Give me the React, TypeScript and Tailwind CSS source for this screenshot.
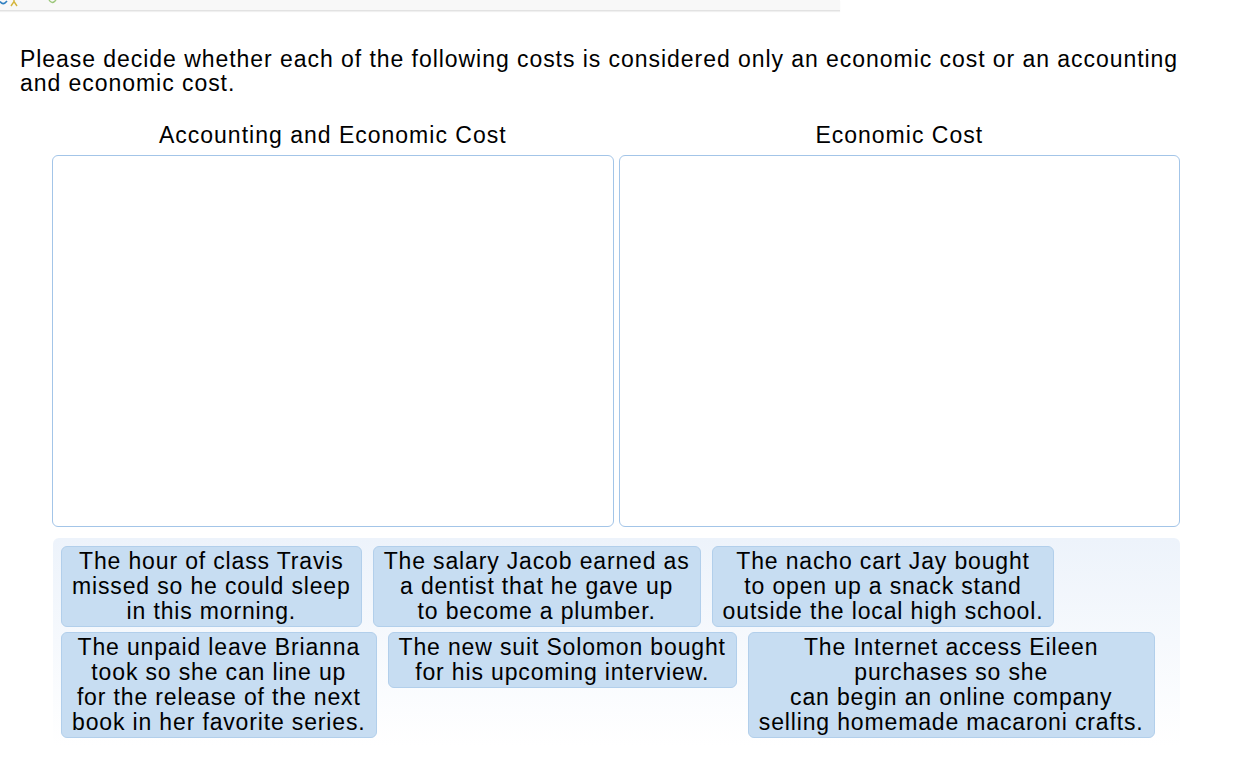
import React from "react";

const cards: string[][] = [
  ["The hour of class Travis", "missed so he could sleep", "in this morning."],
  ["The salary Jacob earned as", "a dentist that he gave up", "to become a plumber."],
  ["The nacho cart Jay bought", "to open up a snack stand", "outside the local high school."],
  [
    "The unpaid leave Brianna",
    "took so she can line up",
    "for the release of the next",
    "book in her favorite series.",
  ],
  ["The new suit Solomon bought", "for his upcoming interview."],
  [
    "The Internet access Eileen",
    "purchases so she",
    "can begin an online company",
    "selling homemade macaroni crafts.",
  ],
];

const App: React.FC = () => {
  return (
    <div className="min-h-[772px] bg-white font-['Liberation_Sans',Arial,sans-serif] text-black">
      {/* toolbar strip left over from the page header */}
      <div className="h-[11px] w-[840px] bg-[#f8f8f8] border-b border-[#e2e2e2] shadow-[0_1px_1px_rgba(0,0,0,0.06)] overflow-hidden relative">
        <svg width="60" height="11" viewBox="0 0 60 11" className="absolute left-0 top-0">
          <path d="M0 1.5 Q3 6 7 1" fill="none" stroke="#2f7fc0" strokeWidth="1.6" />
          <path d="M11 6 L14 1.5 L17 6 M14 1.5 L14 -2" fill="none" stroke="#d4b53b" strokeWidth="1.4" />
          <path d="M49 0 Q52 5 56 0" fill="none" stroke="#9cc77a" strokeWidth="1.4" />
        </svg>
      </div>

      <div className="pl-5 pr-2 pt-[36px]">
        <p className="text-[23px] leading-6 tracking-[0.95px] whitespace-nowrap">
          Please decide whether each of the following costs is considered only an economic cost or an accounting
          <br />
          and economic cost.
        </p>
      </div>

      <div className="ml-[52px] w-[1128px] mt-[28px]">
        <div className="grid grid-cols-2 gap-[5px]">
          <div className="flex flex-col">
            <div className="text-center text-[23px] tracking-[1px] leading-6 h-[32px]">Accounting and Economic Cost</div>
            <div className="h-[372px] rounded-md border border-[#a3c5e8] bg-white" />
          </div>
          <div className="flex flex-col">
            <div className="text-center text-[23px] tracking-[1px] leading-6 h-[32px]">Economic Cost</div>
            <div className="h-[372px] rounded-md border border-[#a3c5e8] bg-white" />
          </div>
        </div>

        <div className="mt-[11px] ml-px rounded-md bg-gradient-to-b from-[#edf3fb] to-white px-2 pt-2 pb-2 flex flex-wrap items-start gap-x-[11px] gap-y-[5px]">
          {cards.map((lines, i) => (
            <div
              key={i}
              className="rounded-md border border-[#b2cfeb] bg-[#c7ddf2] px-[10px] py-[2px] text-center text-[23px] tracking-[0.85px] leading-[25px]"
            >
              {lines.map((l, j) => (
                <div key={j} className="whitespace-nowrap">
                  {l}
                </div>
              ))}
            </div>
          ))}
        </div>
      </div>
    </div>
  );
};

export default App;
